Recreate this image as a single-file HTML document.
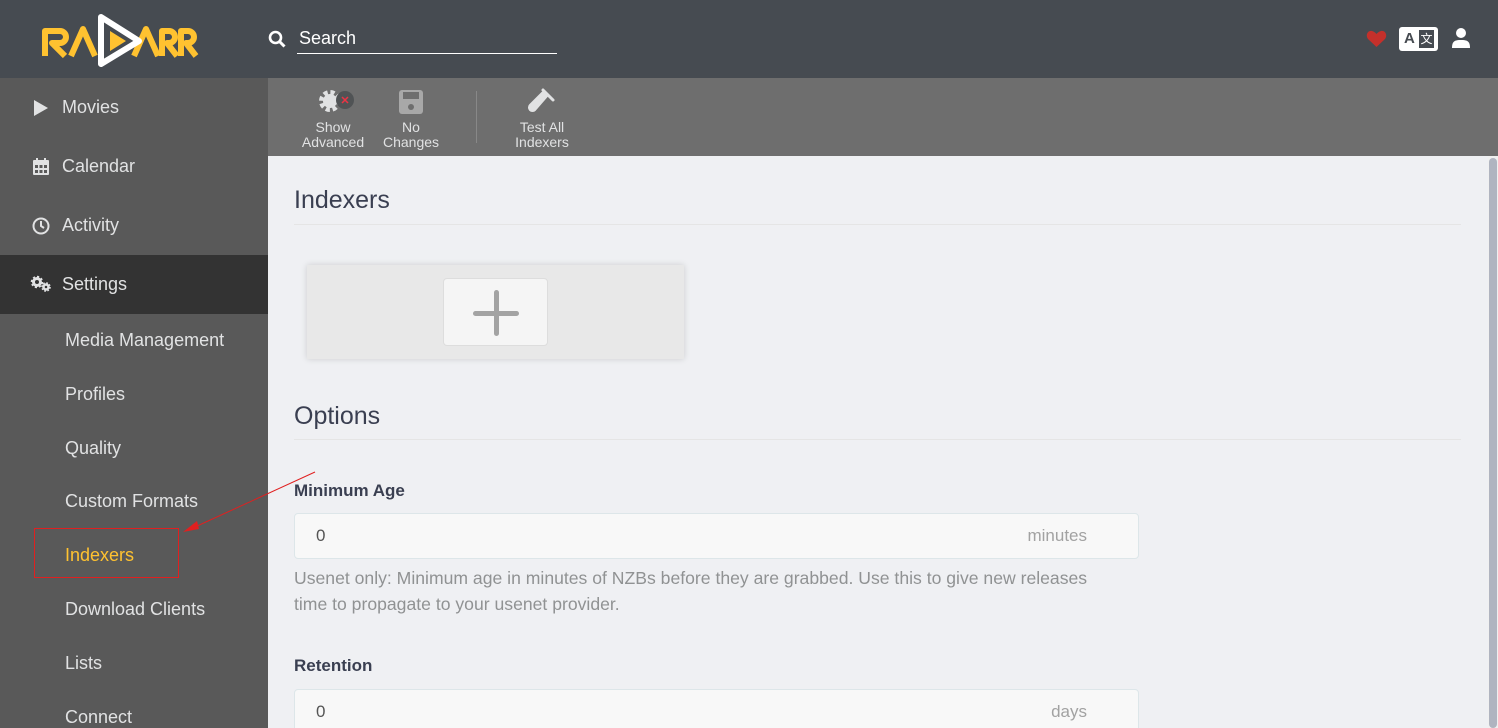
<!DOCTYPE html>
<html><head><meta charset="utf-8"><style>
*{box-sizing:border-box;margin:0;padding:0}
html,body{width:1498px;height:728px;overflow:hidden}
body{font-family:"Liberation Sans",sans-serif;background:#eff0f3;position:relative}
.hdr{position:absolute;left:0;top:0;width:1498px;height:78px;background:#464b51}
.side{position:absolute;left:0;top:78px;width:268px;height:650px;background:#595959;color:#e1e2e3}
.item{position:absolute;left:0;width:268px;height:59px;font-size:18px;line-height:59px;padding-left:62px}
.sub{position:absolute;left:65px;font-size:18px}
.tb{position:absolute;left:268px;top:78px;width:1230px;height:78px;background:#6e6e6e}
.btn{position:absolute;top:120px;text-align:center;color:#e1e2e3;font-size:14px;line-height:15px}
h2{position:absolute;left:294px;font-weight:400;font-size:25px;color:#3a3f51}
.hr{position:absolute;left:294px;width:1167px;height:1px;background:#e5e5e5}
.lbl{position:absolute;left:294px;font-weight:bold;font-size:17px;color:#3a3f51}
.inp{position:absolute;left:294px;width:845px;height:46px;background:#f8f8f8;border:1px solid #dde6e9;border-radius:4px;font-size:17px;color:#555;line-height:44px;padding-left:21px}
.inp span{position:absolute;right:51px;color:#a2a2a2}
.help{position:absolute;left:294px;font-size:17.6px;color:#909293;line-height:26px;white-space:nowrap}
</style></head><body>
<div class="hdr">
<svg style="position:absolute;left:38px;top:12px" width="162" height="58" viewBox="0 0 162 58">
<g fill="none" stroke="#ffc230" stroke-width="6" stroke-linejoin="round">
<path d="M7 44V19h15a6 6 0 0 1 0 12H14L27 44"/>
<path d="M33 44L45 17L57 44"/>
<path d="M96 44L108 17L120 44"/>
<path d="M124 44V19h7a6 6 0 0 1 0 12h-2L139 44"/>
<path d="M143 44V19h7a6 6 0 0 1 0 12h-2L158 44"/>
</g>
<path d="M63 5L101 29L63 52z" fill="none" stroke="#fff" stroke-width="6" stroke-linejoin="round"/>
<path d="M72 19l16 10l-16 10z" fill="#ffc230"/>
</svg>
<svg style="position:absolute;left:268px;top:30px" width="18" height="18" viewBox="0 0 18 18"><circle cx="7.5" cy="7.5" r="5.5" fill="none" stroke="#fff" stroke-width="2.6"/><path d="M11.5 11.5l5 5" stroke="#fff" stroke-width="3"/></svg>
<div style="position:absolute;left:299px;top:28px;color:#fff;font-size:18px">Search</div>
<div style="position:absolute;left:297px;top:53px;width:260px;height:1px;background:#fff"></div>
<svg style="position:absolute;left:1366px;top:30px" width="21" height="18" viewBox="0 0 21 18"><path d="M10.5 17L2 9C-1 5 2 0 6 1c2 .4 3.5 2 4.5 3c1-1 2.5-2.6 4.5-3c4-1 7 4 4 8z" fill="#c4302b"/></svg>
<div style="position:absolute;left:1399px;top:27px;width:39px;height:24px;background:#fff;border-radius:3px"><b style="position:absolute;left:5px;top:3px;font-size:15px;color:#464b51">A</b><div style="position:absolute;left:20px;top:3px;width:15px;height:18px;background:#464b51;color:#fff;font-size:12px;text-align:center;line-height:18px">文</div></div>
<svg style="position:absolute;left:1452px;top:28px" width="18" height="20" viewBox="0 0 18 20"><circle cx="9" cy="5" r="5" fill="#fff"/><path d="M0 20c0-7 3-8 9-8s9 1 9 8z" fill="#fff"/></svg>
</div>
<div class="side">
<div class="item" style="top:0"><svg style="position:absolute;left:34px;top:22px" width="14" height="16"><path d="M0 0l14 8l-14 8z" fill="#e1e2e3"/></svg>Movies</div>
<div class="item" style="top:59px"><svg style="position:absolute;left:33px;top:21px" width="16" height="17"><rect y="2" width="16" height="15" rx="1" fill="#e1e2e3"/><rect x="3" width="2" height="4" fill="#e1e2e3"/><rect x="11" width="2" height="4" fill="#e1e2e3"/><g fill="#595959"><rect x="2" y="7" width="3" height="3"/><rect x="6.5" y="7" width="3" height="3"/><rect x="11" y="7" width="3" height="3"/><rect x="2" y="12" width="3" height="3"/><rect x="6.5" y="12" width="3" height="3"/><rect x="11" y="12" width="3" height="3"/></g></svg>Calendar</div>
<div class="item" style="top:118px"><svg style="position:absolute;left:32px;top:21px" width="18" height="18"><circle cx="9" cy="9" r="7.5" fill="none" stroke="#e1e2e3" stroke-width="2"/><path d="M9 4v5l3 2" fill="none" stroke="#e1e2e3" stroke-width="2"/></svg>Activity</div>
<div class="item" style="top:177px;background:#333"><svg style="position:absolute;left:30px;top:20px" width="22" height="18"><circle cx="7" cy="7" r="3.5" fill="none" stroke="#e1e2e3" stroke-width="3"/><circle cx="7" cy="7" r="5" fill="none" stroke="#e1e2e3" stroke-width="2.5" stroke-dasharray="2 1.9"/><circle cx="16" cy="12" r="2.5" fill="none" stroke="#e1e2e3" stroke-width="2.5"/><circle cx="16" cy="12" r="3.8" fill="none" stroke="#e1e2e3" stroke-width="2" stroke-dasharray="1.6 1.4"/></svg>Settings</div>
<div class="sub" style="top:252px">Media Management</div>
<div class="sub" style="top:306px">Profiles</div>
<div class="sub" style="top:360px">Quality</div>
<div class="sub" style="top:413px">Custom Formats</div>
<div class="sub" style="top:467px;color:#ffc230">Indexers</div>
<div class="sub" style="top:521px">Download Clients</div>
<div class="sub" style="top:575px">Lists</div>
<div class="sub" style="top:629px">Connect</div>
</div>
<div style="position:absolute;left:34px;top:528px;width:145px;height:50px;border:1px solid #e02020"></div>
<svg style="position:absolute;left:0;top:0" width="400" height="600"><path d="M315 472L195 527" stroke="#e02020" stroke-width="1"/><path d="M183 532l14-11l2 8z" fill="#e02020"/></svg>
<div class="tb"><div style="position:absolute;left:208px;top:13px;width:1px;height:52px;background:#888"></div></div>
<svg style="position:absolute;left:318px;top:87px" width="38" height="30"><circle cx="12" cy="14" r="8.5" fill="none" stroke="#e1e2e3" stroke-width="5" stroke-dasharray="4 2.7"/><circle cx="12" cy="14" r="7" fill="#e1e2e3"/><circle cx="27" cy="13" r="9" fill="#505355"/><path d="M24 10l6 6M30 10l-6 6" stroke="#e34" stroke-width="1.5"/></svg>
<div class="btn" style="left:298px;width:70px">Show<br>Advanced</div>
<svg style="position:absolute;left:398px;top:89px" width="26" height="26"><rect x="1" y="1" width="24" height="24" rx="3" fill="#a8a8a8"/><rect x="5" y="3" width="16" height="7" fill="#6e6e6e"/><circle cx="13" cy="18" r="3" fill="#6e6e6e"/></svg>
<div class="btn" style="left:378px;width:66px;color:#e1e2e3">No<br>Changes</div>
<svg style="position:absolute;left:526px;top:87px" width="30" height="30"><path d="M17 3l10 10" stroke="#e1e2e3" stroke-width="3" stroke-linecap="round"/><path d="M22 8l-13 15a3.5 3.5 0 0 1-5-5l13-13z" fill="#e1e2e3" stroke="#e1e2e3" stroke-width="2" stroke-linejoin="round"/></svg>
<div class="btn" style="left:507px;width:70px">Test All<br>Indexers</div>
<div style="position:absolute;left:1488px;top:156px;width:10px;height:572px;background:#f0f0f0"><div style="margin:2px 1px;width:8px;height:570px;background:#b0b4c0;border-radius:4px"></div></div>
<h2 style="top:186px">Indexers</h2>
<div class="hr" style="top:224px"></div>
<div style="position:absolute;left:307px;top:265px;width:377px;height:94px;background:#e8e8e8;box-shadow:0 0 6px rgba(0,0,0,.15)"></div>
<div style="position:absolute;left:443px;top:278px;width:105px;height:68px;background:#f5f5f5;border:1px solid #ddd;border-radius:4px"><div style="position:absolute;left:29px;top:32px;width:46px;height:5px;background:#a3a3a3;border-radius:3px"></div><div style="position:absolute;left:50px;top:11px;width:5px;height:46px;background:#a3a3a3;border-radius:3px"></div></div>
<h2 style="top:402px">Options</h2>
<div class="hr" style="top:439px"></div>
<div class="lbl" style="top:481px">Minimum Age</div>
<div class="inp" style="top:513px">0<span>minutes</span></div>
<div class="help" style="top:565px">Usenet only: Minimum age in minutes of NZBs before they are grabbed. Use this to give new releases<br>time to propagate to your usenet provider.</div>
<div class="lbl" style="top:656px">Retention</div>
<div class="inp" style="top:689px">0<span>days</span></div>
</body></html>
